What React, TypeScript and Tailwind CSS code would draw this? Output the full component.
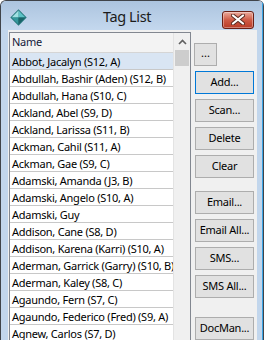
const names = [
  "Abbot, Jacalyn (S12, A)",
  "Abdullah, Bashir (Aden) (S12, B)",
  "Abdullah, Hana (S10, C)",
  "Ackland, Abel (S9, D)",
  "Ackland, Larissa (S11, B)",
  "Ackman, Cahil (S11, A)",
  "Ackman, Gae (S9, C)",
  "Adamski, Amanda (J3, B)",
  "Adamski, Angelo (S10, A)",
  "Adamski, Guy",
  "Addison, Cane (S8, D)",
  "Addison, Karena (Karri) (S10, A)",
  "Aderman, Garrick (Garry) (S10, B)",
  "Aderman, Kaley (S8, C)",
  "Agaundo, Fern (S7, C)",
  "Agaundo, Federico (Fred) (S9, A)",
  "Agnew, Carlos (S7, D)",
];

function AppIcon() {
  return (
    <svg width="17" height="17" viewBox="0 0 16 16">
      <polygon points="8,0.3 15.7,8 8,15.7 0.3,8" fill="#23757a" />
      <polygon points="8,1.5 14.5,8 8,8" fill="#5cc2c6" />
      <polygon points="8,1.5 1.5,8 8,8" fill="#9fe0e2" />
      <polygon points="1.5,8 8,14.5 8,8" fill="#34979c" />
      <polygon points="14.5,8 8,14.5 8,8" fill="#1a6569" />
    </svg>
  );
}

function CloseButton() {
  return (
    <div className="flex h-[18px] w-[32px] items-center justify-center rounded-[3px] border border-[#6b1f14] bg-gradient-to-b from-[#e9a99c] via-[#cf5a45] to-[#b83a26] shadow-[inset_0_0_0_1px_rgba(255,255,255,0.35)]">
      <svg width="14" height="11" viewBox="0 0 14 11">
        <path
          d="M2 1.5 L12 9.5 M12 1.5 L2 9.5"
          stroke="#5a2a20"
          strokeWidth="4"
          strokeLinecap="round"
        />
        <path
          d="M2 1.5 L12 9.5 M12 1.5 L2 9.5"
          stroke="#ffffff"
          strokeWidth="2.2"
          strokeLinecap="round"
        />
      </svg>
    </div>
  );
}

function Btn({ label, focused, className }: { label: string; focused?: boolean; className?: string }) {
  return (
    <div
      className={
        "flex h-[23px] w-[59px] items-center justify-center whitespace-nowrap border bg-[#e1e1e1] text-[11px] tracking-[-0.25px] text-black " +
        (focused ? "border-[#0078d7] " : "border-[#adadad] ") +
        (className ?? "")
      }
    >
      {label}
    </div>
  );
}

export default function App() {
  return (
    <div
      className="relative h-[340px] w-[264px] overflow-hidden rounded-t-[6px] border-l border-t border-[#40444a] bg-[#c2d6ec]"
      style={{ fontFamily: "'Noto Sans', 'Open Sans', sans-serif" }}
    >
      <div className="absolute right-0 top-0 h-full w-[2px] border-l border-[#3ba4e4] bg-[#40444a]" />
      {/* title bar */}
      <div className="flex h-[29px] items-center bg-gradient-to-b from-[#acc4df] to-[#c4d8ee] pl-[9px] pr-[10px]">
        <div className="mt-[3px] flex w-[22px]">
          <AppIcon />
        </div>
        <div className="flex-1 pt-[2px] text-center text-[14.5px] leading-none tracking-[-0.4px] text-[#1b1b1b]">
          Tag List
        </div>
        <div className="mt-[8px]">
          <CloseButton />
        </div>
      </div>
      {/* client area */}
      <div className="ml-[7px] mr-[7px] flex h-full bg-[#f0f0f0] pl-[1px] pt-[2px]">
        <div className="flex h-full w-[182px] border border-[#828790] bg-white">
          <div className="flex w-[163px] flex-col overflow-hidden">
            <div className="flex h-[20px] shrink-0 items-center border-b border-[#d5d5d5] bg-[#f3f3f3] pl-[2px] text-[11px] tracking-[-0.25px] text-[#141a3a]">
              Name
            </div>
            {names.map((n, i) => (
              <div
                key={n}
                className={
                  "flex h-[17px] shrink-0 items-center whitespace-nowrap border-b border-[#c8c8c8] pl-[2px] text-[11px] leading-none tracking-[-0.25px] text-black " +
                  (i === 0 ? "bg-[#d9e5f3]" : "bg-white")
                }
              >
                {n}
              </div>
            ))}
          </div>
          <div className="flex w-[17px] flex-col border-l border-[#e3e3e3] bg-[#f0f0f0]">
            <div className="flex h-[17px] items-center justify-center">
              <svg width="9" height="6" viewBox="0 0 9 6">
                <path d="M1 5 L4.5 1.5 L8 5" stroke="#606060" strokeWidth="1.6" fill="none" />
              </svg>
            </div>
            <div className="mx-[1px] h-[16px] bg-[#cdcdcd]" />
          </div>
        </div>
        <div className="ml-[3px] flex flex-col pt-[11px]">
          <div className="flex h-[23px] w-[23px] items-center justify-center border border-[#adadad] bg-[#e1e1e1] pb-[3px] text-[11px] text-black">
            ...
          </div>
          <Btn label="Add..." focused className="ml-[1px] mt-[5px]" />
          <Btn label="Scan..." className="ml-[1px] mt-[5px]" />
          <Btn label="Delete" className="ml-[1px] mt-[5px]" />
          <Btn label="Clear" className="ml-[1px] mt-[5px]" />
          <Btn label="Email..." className="ml-[1px] mt-[13px]" />
          <Btn label="Email All..." className="ml-[1px] mt-[5px]" />
          <Btn label="SMS..." className="ml-[1px] mt-[5px]" />
          <Btn label="SMS All..." className="ml-[1px] mt-[5px]" />
          <Btn label="DocMan..." className="ml-[1px] mt-[19px]" />
        </div>
      </div>
    </div>
  );
}
